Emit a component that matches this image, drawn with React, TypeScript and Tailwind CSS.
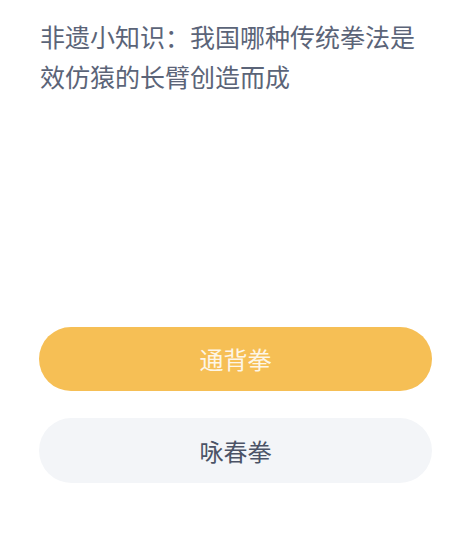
export default function App() {
  return (
    <div
      className="w-[464px] h-[551px] bg-white flex flex-col px-[39px]"
      style={{ fontFamily: '"Noto Sans CJK SC", "Noto Sans", sans-serif' }}
    >
      <div className="pt-[16px] text-[25px] leading-[40px] text-[#5b6478] pl-[1px]">
        非遗小知识：我国哪种传统拳法是效仿猿的长臂创造而成
      </div>
      <div className="mt-[231px] flex flex-col gap-[27px]">
        <div className="h-[64px] w-[393px] rounded-full bg-[#f6bf55] flex items-center justify-center text-[24px] text-[#fdf6e8]">
          通背拳
        </div>
        <div className="h-[65px] w-[393px] rounded-full bg-[#f3f5f8] flex items-center justify-center text-[24px] text-[#4b5366]">
          咏春拳
        </div>
      </div>
    </div>
  );
}
